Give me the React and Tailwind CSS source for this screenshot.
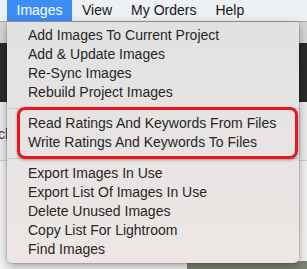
import React from "react";

const topItems = [
  "Add Images To Current Project",
  "Add & Update Images",
  "Re-Sync Images",
  "Rebuild Project Images",
];
const midItems = [
  "Read Ratings And Keywords From Files",
  "Write Ratings And Keywords To Files",
];
const bottomItems = [
  "Export Images In Use",
  "Export List Of Images In Use",
  "Delete Unused Images",
  "Copy List For Lightroom",
  "Find Images",
];

const MenuItem = ({ label }) => (
  <div className="h-[19px] pl-[21px] text-[14px] leading-[19px] text-[#262626] whitespace-nowrap">
    {label}
  </div>
);

const Separator = () => (
  <div className="h-[12px] flex items-center">
    <div className="h-px w-full bg-[#c9c9c9]" />
  </div>
);

export default function App() {
  return (
    <div
      className="relative w-[307px] h-[269px] overflow-hidden bg-[#f2f2f2]"
      style={{ fontFamily: '"Liberation Sans", Arial, sans-serif' }}
    >
      {/* menu bar */}
      <div className="flex h-[22px] items-center bg-[#edf0f4] border-b border-[#a9a9a9] text-[14px] text-[#151515]">
        <div className="ml-[7px] flex h-full w-[65px] items-center justify-center bg-[#3d8df6] text-white">
          Images
        </div>
        <div className="ml-[10px] px-[0px]">View</div>
        <div className="ml-[19px]">My Orders</div>
        <div className="ml-[19px]">Help</div>
      </div>

      {/* app window behind the menu */}
      <div className="flex flex-col">
        <div className="h-[21px] bg-[#d6d6d6]" />
        <div className="h-[59px] bg-[#2a2a2a]" />
        <div className="h-[58px] bg-[#ebebeb] flex items-center">
          <span className="-ml-[2px] mt-[6px] text-[14px] text-[#333]">ch</span>
        </div>
        <div className="h-px bg-[#cfcfcf]" />
        <div className="flex-1 bg-[#f3f3f3]" />
      </div>
      <div className="absolute right-0 bottom-0 h-[8px] w-[120px] bg-[#7d8472]" />

      {/* dropdown menu */}
      <div className="absolute left-[7px] top-[22px] w-[292px] pt-[4px] pb-[4px] rounded-b-[5px] bg-gradient-to-b from-[#e2e2e2] to-[#ede6e4] shadow-[0_3px_10px_rgba(0,0,0,0.35)] ring-1 ring-black/10">
        {topItems.map((t) => (
          <MenuItem key={t} label={t} />
        ))}
        <Separator />
        {midItems.map((t) => (
          <MenuItem key={t} label={t} />
        ))}
        <Separator />
        {bottomItems.map((t) => (
          <MenuItem key={t} label={t} />
        ))}

        {/* highlight annotation */}
        <div className="absolute left-[10px] top-[85px] h-[52px] w-[281px] rounded-[8px] border-[3px] border-[#e8161d] shadow-[0_1px_3px_rgba(0,0,0,0.35)]" />
      </div>
    </div>
  );
}
